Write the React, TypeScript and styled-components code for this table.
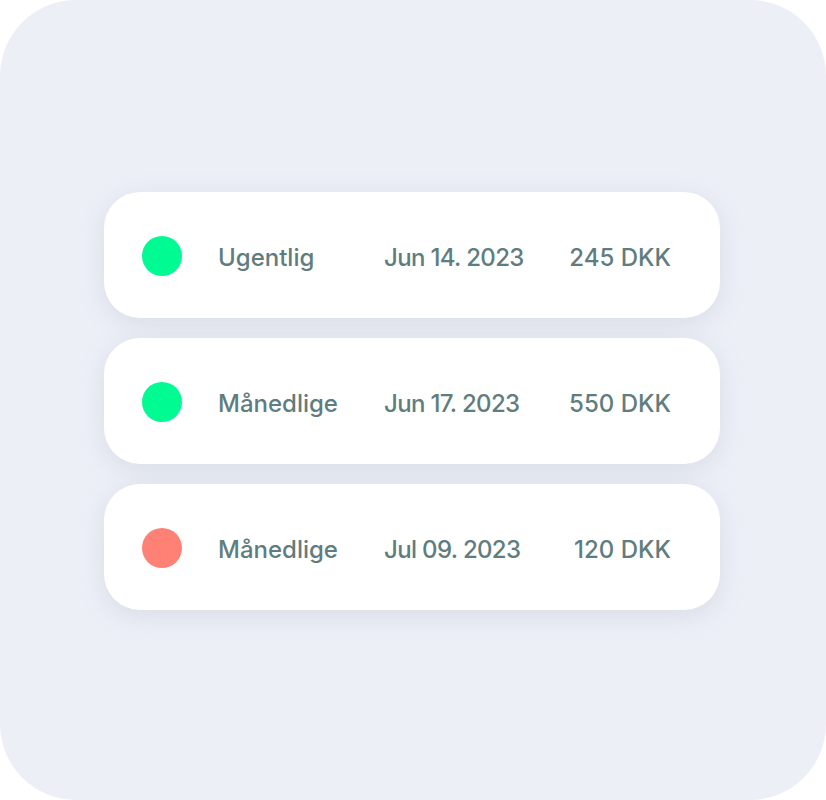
import React from "react";
import styled, { createGlobalStyle } from "styled-components";

const Global = createGlobalStyle`
  html, body { margin: 0; padding: 0; background: #ffffff; }
  body { font-family: Inter, "Noto Sans", sans-serif; }
`;

const Panel = styled.div`
  width: 826px;
  height: 800px;
  border-radius: 76px;
  background: #eceff6;
  display: flex;
  flex-direction: column;
  align-items: center;
  justify-content: center;
  gap: 20px;
  box-sizing: border-box;
  padding: 2px 2px 0 0;
`;

const Card = styled.div`
  width: 616px;
  height: 126px;
  box-sizing: border-box;
  background: #ffffff;
  border-radius: 36px;
  box-shadow: 0 6px 24px rgba(150, 160, 180, 0.22);
  display: grid;
  grid-template-columns: 76px 166px 1fr auto;
  align-items: center;
  padding: 4px 49px 0 38px;
  color: #5f7d7e;
  font-size: 24px;
  font-weight: 500;
`;

const Dot = styled.span<{ $color: string }>`
  width: 40px;
  height: 40px;
  border-radius: 50%;
  background: ${(p) => p.$color};
  margin-top: -2px;
`;

const Label = styled.span``;
const DateText = styled.span`
  letter-spacing: -0.65px;
`;
const Amount = styled.span`
  text-align: right;
`;

const rows = [
  { color: "#00fb92", label: "Ugentlig", date: "Jun 14. 2023", amount: "245 DKK" },
  { color: "#00fb92", label: "Månedlige", date: "Jun 17. 2023", amount: "550 DKK" },
  { color: "#ff8175", label: "Månedlige", date: "Jul 09. 2023", amount: "120 DKK" },
];

export default function App() {
  return (
    <>
      <Global />
      <Panel>
        {rows.map((r, i) => (
          <Card key={i}>
            <Dot $color={r.color} />
            <Label>{r.label}</Label>
            <DateText>{r.date}</DateText>
            <Amount>{r.amount}</Amount>
          </Card>
        ))}
      </Panel>
    </>
  );
}
